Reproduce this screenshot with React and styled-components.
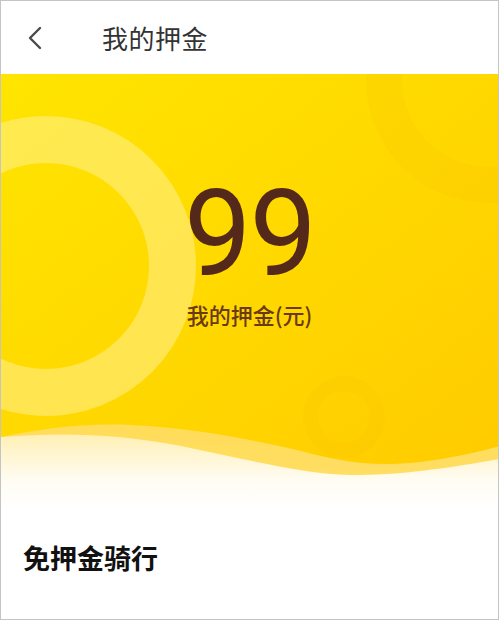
import React from "react";
import styled, { createGlobalStyle } from "styled-components";

const GlobalStyle = createGlobalStyle`
  * { box-sizing: border-box; }
  body {
    margin: 0;
    background: #fff;
    font-family: "Noto Sans CJK SC", "Noto Sans", sans-serif;
  }
`;

const Page = styled.div`
  width: 499px;
  height: 620px;
  border: 1px solid #c4c4c4;
  background: #fff;
  overflow: hidden;
  display: flex;
  flex-direction: column;
`;

const Header = styled.div`
  height: 73px;
  display: flex;
  align-items: center;
  padding-left: 22px;
  flex-shrink: 0;
`;

const BackButton = styled.button`
  width: 24px;
  height: 30px;
  padding: 0;
  border: none;
  background: none;
  display: flex;
  align-items: center;
  justify-content: center;
  cursor: pointer;
`;

const Title = styled.h1`
  margin: 0 0 0 55px;
  font-size: 26px;
  font-weight: 400;
  color: #333;
  letter-spacing: 0.5px;
`;

const Banner = styled.div`
  position: relative;
  height: 436px;
  flex-shrink: 0;
  overflow: hidden;
  background: linear-gradient(180deg, #ffefb0 0%, #ffefb0 82%, #fffcf2 93%, #ffffff 100%);
  display: flex;
  flex-direction: column;
  align-items: center;
  padding-top: 110px;
`;

const Backdrop = styled.svg`
  position: absolute;
  left: 0;
  top: 0;
  width: 497px;
  height: 436px;
`;

const Amount = styled.div`
  position: relative;
  font-family: Roboto, "Noto Sans", sans-serif;
  font-weight: 400;
  font-size: 120px;
  line-height: 100px;
  color: #55291a;
  letter-spacing: -2px;
`;

const AmountLabel = styled.div`
  position: relative;
  margin-top: 17px;
  font-size: 22px;
  line-height: 26px;
  font-weight: 500;
  color: #6a3a14;
`;

const Section = styled.div`
  padding: 30px 22px 0;
`;

const SectionTitle = styled.h2`
  margin: 0;
  font-size: 27px;
  line-height: 35px;
  font-weight: 700;
  color: #111;
`;

const solidWave =
  "M0,0 H499 V372 C470,380 430,389 390,390 C360,391 330,385 300,377 C260,368 200,354 130,351 C80,349 40,355 0,363 Z";
const bandWave =
  "M0,0 H499 V385 C460,392 400,402 350,401 C300,400 240,384 180,372 C120,360 60,358 0,363 Z";

const BannerBackdrop = () => (
  <Backdrop viewBox="0 0 497 436" preserveAspectRatio="none">
    <defs>
      <linearGradient id="gold" x1="0" y1="0" x2="1" y2="1">
        <stop offset="0" stopColor="#ffe500" />
        <stop offset="0.55" stopColor="#ffd700" />
        <stop offset="1" stopColor="#ffcb00" />
      </linearGradient>
      <clipPath id="solidClip">
        <path d={solidWave} />
      </clipPath>
    </defs>
    <path d={bandWave} fill="#ffd84a" opacity="0.85" />
    <path d={solidWave} fill="url(#gold)" />
    <g clipPath="url(#solidClip)">
      <circle cx="45" cy="192" r="126.5" fill="none" stroke="#fff2a0" strokeOpacity="0.5" strokeWidth="47" />
      <circle cx="488" cy="6" r="105" fill="none" stroke="#e8b000" strokeOpacity="0.1" strokeWidth="36" />
      <circle cx="343" cy="343" r="33.5" fill="none" stroke="#e8b000" strokeOpacity="0.08" strokeWidth="15" />
    </g>
  </Backdrop>
);

export default function App() {
  return (
    <>
      <GlobalStyle />
      <Page>
        <Header>
          <BackButton aria-label="返回">
            <svg width="16" height="24" viewBox="0 0 16 24">
              <path d="M13 2 L3 12 L13 22" fill="none" stroke="#4a4a4a" strokeWidth="2.4" strokeLinecap="round" strokeLinejoin="round" />
            </svg>
          </BackButton>
          <Title>我的押金</Title>
        </Header>
        <Banner>
          <BannerBackdrop />
          <Amount>99</Amount>
          <AmountLabel>我的押金(元)</AmountLabel>
        </Banner>
        <Section>
          <SectionTitle>免押金骑行</SectionTitle>
        </Section>
      </Page>
    </>
  );
}
